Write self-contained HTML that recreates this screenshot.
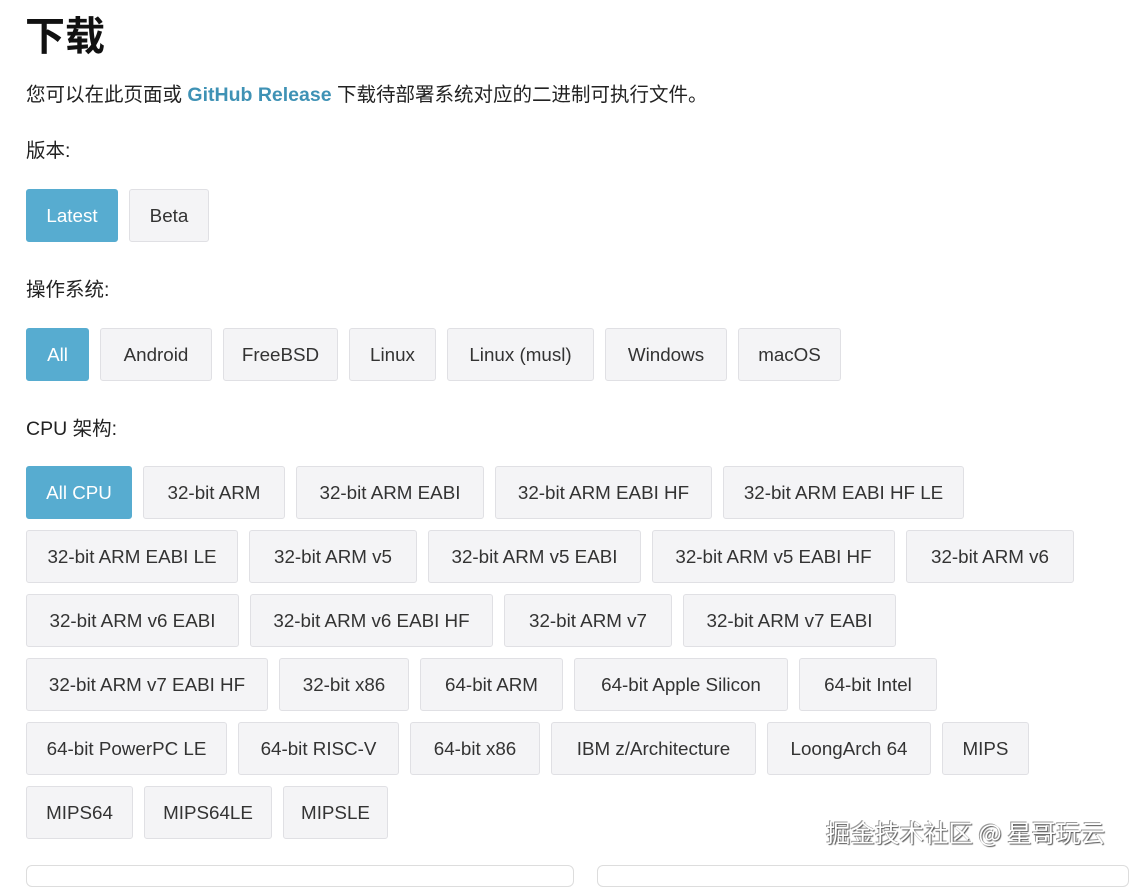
<!DOCTYPE html>
<html><head><meta charset="utf-8"><style>
body{margin:0;background:#fff;width:1135px;height:869px;overflow:hidden;position:relative;font-family:"Liberation Sans","Noto Sans CJK SC",sans-serif;color:#222}
.t{position:absolute;left:26px;font-size:19.5px;white-space:nowrap}
h1{position:absolute;left:25px;top:4px;margin:0;font-size:40px;font-weight:bold;color:#111;font-family:"Liberation Sans","Noto Sans CJK SC",sans-serif}
a{color:#3f92b5;text-decoration:none;font-weight:bold}
.b{position:absolute;border:1px solid #e0e0e4;background:#f4f4f6;border-radius:3px;box-sizing:border-box;height:53px;display:flex;align-items:center;justify-content:center;font-size:18.8px;color:#333;white-space:nowrap}
.a{background:#57acd0;border-color:#57acd0;color:#fff}
.card{position:absolute;top:865px;height:20px;border:1px solid #ddd;border-radius:6px}
.wm{position:absolute;left:826px;top:815px;font-size:24.5px;color:#fff;text-shadow:1px 1px 1px #555,-1px -1px 0 #999;font-family:"Noto Sans CJK SC",sans-serif}
</style></head><body>
<h1>下载</h1>
<div class="t" style="top:78px">您可以在此页面或 <a>GitHub Release</a> 下载待部署系统对应的二进制可执行文件。</div>
<div class="t" style="top:134px">版本:</div>
<div class="t" style="top:273px">操作系统:</div>
<div class="t" style="top:412px">CPU 架构:</div>
<div id="c"></div>
<div class="card" style="left:26px;width:546px"></div>
<div class="card" style="left:597px;width:530px"></div>
<div class="wm">掘金技术社区 @ 星哥玩云</div>
<script>
var rows=[[189,[[26,118,"Latest",1],[129,209,"Beta"]]],
[328,[[26,89,"All",1],[100,212,"Android"],[223,338,"FreeBSD"],[349,436,"Linux"],[447,594,"Linux (musl)"],[605,727,"Windows"],[738,841,"macOS"]]],
[466,[[26,132,"All CPU",1],[143,285,"32-bit ARM"],[296,484,"32-bit ARM EABI"],[495,712,"32-bit ARM EABI HF"],[723,964,"32-bit ARM EABI HF LE"]]],
[530,[[26,238,"32-bit ARM EABI LE"],[249,417,"32-bit ARM v5"],[428,641,"32-bit ARM v5 EABI"],[652,895,"32-bit ARM v5 EABI HF"],[906,1074,"32-bit ARM v6"]]],
[594,[[26,239,"32-bit ARM v6 EABI"],[250,493,"32-bit ARM v6 EABI HF"],[504,672,"32-bit ARM v7"],[683,896,"32-bit ARM v7 EABI"]]],
[658,[[26,268,"32-bit ARM v7 EABI HF"],[279,409,"32-bit x86"],[420,563,"64-bit ARM"],[574,788,"64-bit Apple Silicon"],[799,937,"64-bit Intel"]]],
[722,[[26,227,"64-bit PowerPC LE"],[238,399,"64-bit RISC-V"],[410,540,"64-bit x86"],[551,756,"IBM z/Architecture"],[767,931,"LoongArch 64"],[942,1029,"MIPS"]]],
[786,[[26,133,"MIPS64"],[144,272,"MIPS64LE"],[283,388,"MIPSLE"]]]];
var h="";rows.forEach(function(r){r[1].forEach(function(b){h+='<div class="b'+(b[3]?' a':'')+'" style="top:'+r[0]+'px;left:'+b[0]+'px;width:'+(b[1]-b[0])+'px">'+b[2]+'</div>'})});
document.getElementById("c").innerHTML=h;
</script>
</body></html>
